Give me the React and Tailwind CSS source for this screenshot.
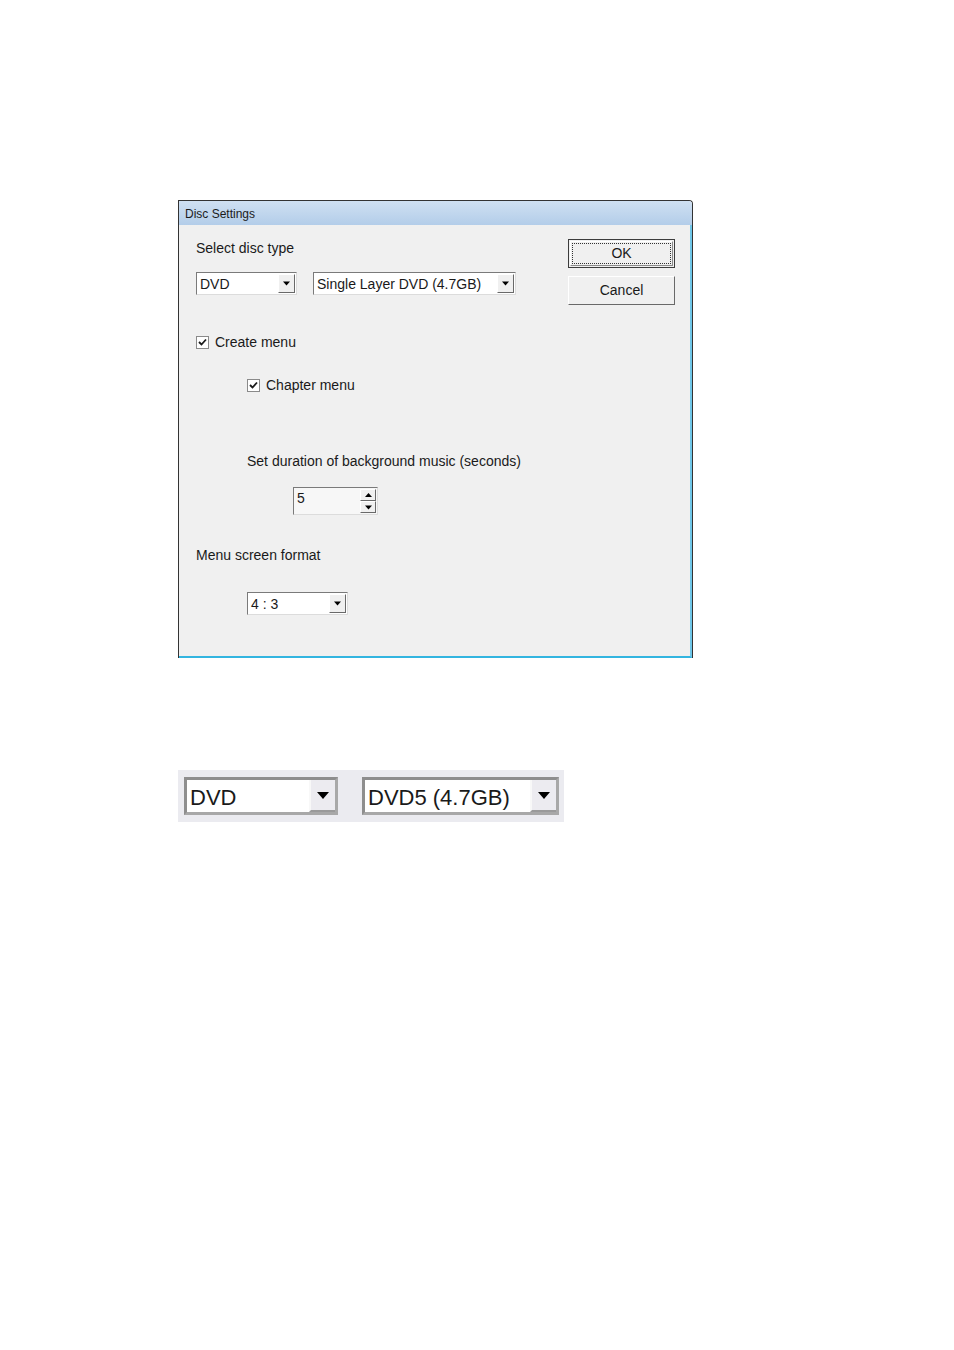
import React from "react";

const font = { fontFamily: '"Liberation Sans", Arial, sans-serif' };

const Arrow = ({ size = 7 }) => (
  <svg width={size} height={Math.ceil(size / 2) + 1} viewBox="0 0 7 4" className="block">
    <path d="M0 0 H7 L3.5 4 Z" fill="#000" />
  </svg>
);

const Combo = ({ value, className }) => (
  <div className={`flex h-[23px] border border-t-[#7a7a7a] border-l-[#7a7a7a] border-r-[#dcdcdc] border-b-[#dcdcdc] bg-white ${className}`}>
    <div className="flex-1 flex items-center pl-[3px] text-[14px] leading-none text-[#1a1a1a] truncate">{value}</div>
    <div className="w-[17px] m-[1px] flex items-center justify-center bg-[#f0f0f0] border border-t-white border-l-white border-r-[#696969] border-b-[#696969]">
      <Arrow />
    </div>
  </div>
);

const BigCombo = ({ value, className }) => (
  <div className={`flex h-[38px] border-[3px] border-t-[#8e8e8e] border-l-[#8e8e8e] border-r-[#a8a8a8] border-b-[#a8a8a8] bg-white ${className}`}>
    <div className="flex-1 flex items-center pl-[3px] pt-[3px] text-[22px] leading-none text-[#1a1a1a]">{value}</div>
    <div className="w-[26px] flex items-center justify-center bg-[#ecebf0] border-l-2 border-l-[#f8f8f8] border-b-2 border-b-[#9a9a9a]">
      <svg width="12" height="7" viewBox="0 0 12 7"><path d="M0 0 H12 L6 7 Z" fill="#000" /></svg>
    </div>
  </div>
);

const Check = ({ label }) => (
  <div className="flex items-center h-[16px]">
    <div className="w-[13px] h-[13px] bg-white border border-[#8a8a8a] flex items-center justify-center">
      <svg width="9" height="9" viewBox="0 0 9 9">
        <path d="M1 4 L3.5 6.5 L8 1.5" stroke="#1a1a1a" strokeWidth="1.8" fill="none" />
      </svg>
    </div>
    <span className="ml-[6px] text-[14px] text-[#1a1a1a]">{label}</span>
  </div>
);

const Button = ({ children, isDefault }) => (
  <div className={`w-[107px] h-[29px] flex items-center justify-center bg-[#f0f0f0] ${isDefault ? "border border-[#3c3c3c] p-[1px]" : "border border-t-white border-l-white border-r-[#696969] border-b-[#696969]"}`}>
    {isDefault ? (
      <div className="w-full h-full border border-t-white border-l-white border-r-[#8a8a8a] border-b-[#8a8a8a] p-[1px]">
        <div className="w-full h-full border border-dotted border-[#333] flex items-center justify-center text-[14px] text-[#1a1a1a]">{children}</div>
      </div>
    ) : (
      <span className="text-[14px] text-[#1a1a1a]">{children}</span>
    )}
  </div>
);

export default function App() {
  return (
    <div className="min-h-[1350px] w-[954px] bg-white pt-[200px] pl-[178px]" style={font}>
      <div className="w-[515px] h-[458px] flex flex-col border border-[#333] border-b-0 rounded-tr-[4px] bg-[#f0f0f0]">
        <div className="h-[24px] flex items-center pl-[6px] pt-[1px] bg-gradient-to-b from-[#cfe0f2] to-[#b3cde9] text-[12px] text-[#1b1b1b] rounded-tr-[3px]">
          Disc Settings
        </div>
        <div className="flex-1 flex border-r-2 border-r-[#6fc6e8] border-b-2 border-b-[#33b5e0]">
          <div className="flex-1 flex flex-col pl-[17px] pt-[15px]">
            <div className="h-[16px] text-[14px] leading-[16px] text-[#1a1a1a]">Select disc type</div>
            <div className="flex mt-[16px]">
              <Combo value="DVD" className="w-[101px]" />
              <Combo value="Single Layer DVD (4.7GB)" className="w-[203px] ml-[16px]" />
            </div>
            <div className="mt-[39px]">
              <Check label="Create menu" />
            </div>
            <div className="mt-[27px] ml-[51px]">
              <Check label="Chapter menu" />
            </div>
            <div className="mt-[60px] ml-[51px] h-[16px] text-[14px] leading-[16px] text-[#1a1a1a]">
              Set duration of background music (seconds)
            </div>
            <div className="mt-[18px] ml-[97px] w-[85px] h-[28px] flex border border-t-[#7a7a7a] border-l-[#7a7a7a] border-r-[#dcdcdc] border-b-[#dcdcdc] bg-[#f7f7f7]">
              <div className="flex-1 pl-[3px] pt-[2px] text-[14px] leading-[16px] text-[#1a1a1a]">5</div>
              <div className="w-[16px] flex flex-col mr-[1px] my-[1px]">
                <div className="flex-1 flex items-center justify-center bg-[#f0f0f0] border border-t-white border-l-white border-r-[#696969] border-b-[#696969]">
                  <svg width="7" height="4" viewBox="0 0 7 4"><path d="M0 4 H7 L3.5 0 Z" fill="#000" /></svg>
                </div>
                <div className="flex-1 flex items-center justify-center bg-[#f0f0f0] border border-t-white border-l-white border-r-[#696969] border-b-[#696969]">
                  <Arrow />
                </div>
              </div>
            </div>
            <div className="mt-[32px] h-[16px] text-[14px] leading-[16px] text-[#1a1a1a]">Menu screen format</div>
            <div className="mt-[29px] ml-[51px]">
              <Combo value="4 : 3" className="w-[101px]" />
            </div>
          </div>
          <div className="flex flex-col pt-[14px] pr-[15px] gap-[8px]">
            <Button isDefault>OK</Button>
            <Button>Cancel</Button>
          </div>
        </div>
      </div>

      <div className="mt-[112px] w-[386px] h-[52px] bg-[#ebebf0] flex items-center pl-[6px]">
        <BigCombo value="DVD" className="w-[154px]" />
        <BigCombo value="DVD5 (4.7GB)" className="w-[197px] ml-[24px]" />
      </div>
    </div>
  );
}
